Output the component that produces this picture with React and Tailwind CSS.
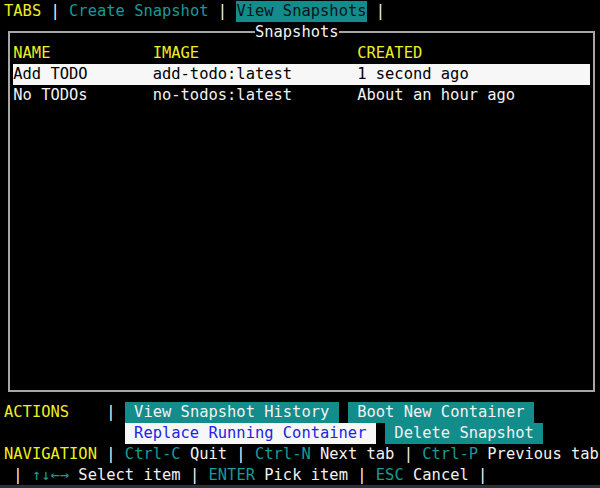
import React from "react";

const snapshots = [
  { name: "Add TODO", image: "add-todo:latest", created: "1 second ago" },
  { name: "No TODOs", image: "no-todos:latest", created: "About an hour ago" },
];

function Line({ children, className = "" }) {
  return <div className={`h-[21.1px] leading-[21.1px] whitespace-pre flex ${className}`}>{children}</div>;
}

const Y = "text-[#eeee22]";
const T = "text-[#179a9a]";

export default function App() {
  return (
    <div className="w-[600px] h-[488px] bg-black overflow-hidden flex flex-col">
      <div
        className="h-[485px] shrink-0 overflow-hidden pl-[4px] pt-[0.8px] text-[15.45px] text-[#f2f2f2]"
        style={{ fontFamily: '"DejaVu Sans Mono", "Liberation Mono", monospace' }}
      >
        {/* Tabs */}
        <Line>
          <span className={Y}>TABS</span>
          <span> | </span>
          <span className={T}>Create Snapshot</span>
          <span> | </span>
          <span className="bg-[#138c8c] text-[#0b1414]">View Snapshots</span>
          <span> |</span>
        </Line>

        {/* Snapshots box */}
        <div className="mt-[9.55px] mb-[9.45px] ml-[calc(0.5ch-1px)] w-[calc(63ch+2px)] border-2 border-[#a6a6a6] px-[calc(0.5ch-1px)] pb-[9.65px]">
          <Line className="-mt-[11.55px]">
            <span className="ml-[26ch] bg-black">Snapshots</span>
          </Line>
          <Line className={Y}>
            <span className="w-[15ch]">NAME</span>
            <span className="w-[22ch]">IMAGE</span>
            <span>CREATED</span>
          </Line>
          {snapshots.map((s, i) => (
            <Line key={s.name} className={i === 0 ? "bg-[#f7f7f7] text-black" : ""}>
              <span className="w-[15ch]">{s.name}</span>
              <span className="w-[22ch]">{s.image}</span>
              <span>{s.created}</span>
            </Line>
          ))}
          <div className="h-[calc(21.1px*13)]" />
        </div>

        {/* Actions */}
        <Line>
          <span className={Y}>ACTIONS</span>
          <span>    | </span>
          <span className="bg-[#138c8c]"> View Snapshot History </span>
          <span> </span>
          <span className="bg-[#138c8c]"> Boot New Container </span>
        </Line>
        <Line>
          <span className="w-[13ch]" />
          <span className="bg-[#f7f7f7] text-[#2222e6]"> Replace Running Container </span>
          <span> </span>
          <span className="bg-[#138c8c]"> Delete Snapshot </span>
        </Line>

        {/* Navigation */}
        <Line>
          <span className={Y}>NAVIGATION</span>
          <span> | </span>
          <span className={T}>Ctrl-C</span>
          <span> Quit | </span>
          <span className={T}>Ctrl-N</span>
          <span> Next tab | </span>
          <span className={T}>Ctrl-P</span>
          <span> Previous tab</span>
        </Line>
        <Line>
          <span> | </span>
          <span className={T}>↑↓←→</span>
          <span> Select item | </span>
          <span className={T}>ENTER</span>
          <span> Pick item | </span>
          <span className={T}>ESC</span>
          <span> Cancel |</span>
        </Line>
      </div>
      <div className="flex-1 bg-[#2c3038]" />
    </div>
  );
}
